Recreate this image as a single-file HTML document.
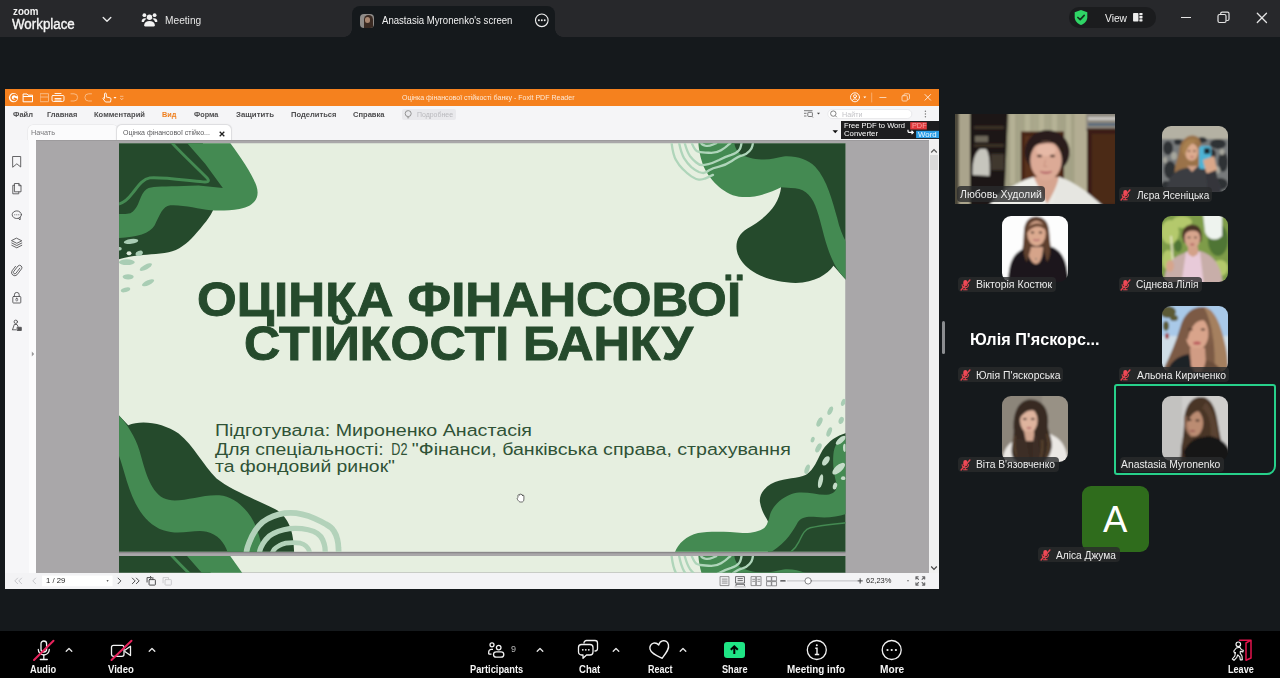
<!DOCTYPE html>
<html lang="uk">
<head>
<meta charset="utf-8">
<title>Zoom Meeting</title>
<style>
*{box-sizing:border-box;margin:0;padding:0}
html,body{width:1280px;height:678px;overflow:hidden;background:#15191c}
body{position:relative;font-family:"Liberation Sans","DejaVu Sans",sans-serif;color:#fff}
.abs,.t,svg.i{position:absolute}
.t{white-space:nowrap}
#topbar{left:0;top:0;width:1280px;height:37px;background:#27282b}
#tab{left:352px;top:6px;width:203px;height:31px;background:#15191c;border-radius:8px 8px 0 0}
#tab:before,#tab:after{content:"";position:absolute;bottom:0;width:8px;height:8px}
#tab:before{left:-8px;background:radial-gradient(circle at 0 0,#27282b 7.5px,#15191c 8px)}
#tab:after{right:-8px;background:radial-gradient(circle at 100% 0,#27282b 7.5px,#15191c 8px)}
#bottombar{left:0;top:631px;width:1280px;height:47px;background:#000}
#share{left:5px;top:89px;width:934px;height:500px;background:#a9a7a9;overflow:hidden}
.lbl{position:absolute;height:15px;border-radius:4px;background:rgba(41,42,44,.8)}
.av{position:absolute;width:66px;height:66px;border-radius:9px;overflow:hidden}
.av svg{display:block}
</style>
</head>
<body>
<!-- top bar -->
<div id="topbar" class="abs">
<div class="t" style="left:12.50px;top:5.94px;font-size:10px;line-height:12px;color:#f3f3f3;font-weight:bold;transform:scaleX(0.977);transform-origin:left center;">zoom</div><div class="t" style="left:12.30px;top:16.45px;font-size:14px;line-height:17px;color:#f6f6f6;transform:scaleX(0.953);transform-origin:left center;-webkit-text-stroke:0.35px #f6f6f6;">Workplace</div><svg class="i" style="left:101px;top:15px" width="12" height="9" viewBox="0 0 12 9"><path d="M2.200 2.500 L6 6.200 L9.800 2.500" fill="none" stroke="#e8e8e8" stroke-width="1.400" stroke-linecap="round" stroke-linejoin="round"/></svg>
<svg class="i" style="left:141px;top:11px" width="17" height="17" viewBox="0 0 17 17" fill="#f2f2f2"><circle cx="8.500" cy="6.200" r="2.700"/><circle cx="3.400" cy="4.200" r="1.900"/><circle cx="13.600" cy="4.200" r="1.900"/><path d="M4.300 15.500c-.9 0-1.300-.6-1.200-1.400C3.500 11.400 5.500 10 8.500 10s5 1.400 5.400 4.100c.1.800-.3 1.400-1.200 1.400z"/><path d="M.6 10.300C.8 8.300 2 7.200 4 7.200c.7 0 1.300.2 1.800.5C4.400 8.400 3.300 9.500 2.900 11H1.500C.9 11 .5 10.800.6 10.300z"/><path d="M16.400 10.300C16.200 8.300 15 7.200 13 7.200c-.7 0-1.300.2-1.800.5 1.400.7 2.500 1.800 2.900 3.300h1.400c.6 0 1-.2.900-.7z"/></svg>
<div class="t" style="left:164.50px;top:14.26px;font-size:10.5px;line-height:13px;color:#e6e6e6;transform:scaleX(0.969);transform-origin:left center;">Meeting</div><div class="abs" style="left:1069px;top:7px;width:87px;height:21px;border-radius:10px;background:#1b1c1e"></div>
<svg class="i" style="left:1073px;top:9px" width="16" height="17" viewBox="0 0 16 17"><path d="M8 1 L14.300 3.300 V8.300 C14.300 12 11.500 14.800 8 16 C4.500 14.800 1.700 12 1.700 8.300 V3.300 Z" fill="#2fd566"/><path d="M4.900 8.500 L7.200 10.700 L11.200 6.400" fill="none" stroke="#14331f" stroke-width="1.700" stroke-linecap="round" stroke-linejoin="round"/></svg>
<div class="t" style="left:1105.00px;top:12.26px;font-size:10.5px;line-height:13px;color:#f0f0f0;transform:scaleX(0.975);transform-origin:left center;">View</div><svg class="i" style="left:1133.300px;top:13.300px" width="10" height="9" viewBox="0 0 11 10" fill="#ededed"><rect x="0" y="0" width="6" height="9.500" rx="0.800"/><rect x="7" y="0" width="3.500" height="2.600" rx="0.500"/><rect x="7" y="3.450" width="3.500" height="2.600" rx="0.500"/><rect x="7" y="6.900" width="3.500" height="2.600" rx="0.500"/></svg>
<div class="abs" style="left:1181px;top:17px;width:10px;height:1.300px;background:#e4e4e4"></div>
<svg class="i" style="left:1217px;top:11px" width="13" height="13" viewBox="0 0 13 13" fill="none" stroke="#e4e4e4" stroke-width="1.200"><rect x="1" y="3.500" width="8" height="8" rx="1.500"/><path d="M3.700 3.300 V2.600 a1.500 1.500 0 0 1 1.500 -1.500 H10.500 a1.500 1.500 0 0 1 1.500 1.500 V8 a1.500 1.500 0 0 1 -1.500 1.500 H9.300"/></svg>
<svg class="i" style="left:1256px;top:12px" width="12" height="12" viewBox="0 0 12 12"><path d="M1.300 1.300 L10.500 10.500 M10.500 1.300 L1.300 10.500" stroke="#e4e4e4" stroke-width="1.300" stroke-linecap="round"/></svg>
</div>
<div id="tab" class="abs">
<div class="abs" style="left:8px;top:8px;width:14px;height:14px;border-radius:7px;overflow:hidden;background:#8f8c89;border-radius:4px"><div class="abs" style="left:4px;top:1px;width:9px;height:14px;border-radius:5px 5px 2px 2px;background:#3a2a22"></div><div class="abs" style="left:5px;top:3px;width:4.500px;height:6px;border-radius:3px;background:#a88670"></div></div>
<div class="t" style="left:29.60px;top:8.26px;font-size:10.5px;line-height:13px;color:#f1f1f1;transform:scaleX(0.914);transform-origin:left center;">Anastasia Myronenko's screen</div><svg class="i" style="left:182px;top:7px" width="16" height="16" viewBox="0 0 16 16"><circle cx="7.800" cy="7.300" r="6.300" fill="none" stroke="#f0f0f0" stroke-width="1.100"/><circle cx="4.900" cy="7.300" r="0.950" fill="#f0f0f0"/><circle cx="7.800" cy="7.300" r="0.950" fill="#f0f0f0"/><circle cx="10.700" cy="7.300" r="0.950" fill="#f0f0f0"/></svg>
</div>
<!-- shared screen: Foxit PDF Reader -->
<div id="share" class="abs">
<div class="abs" style="left:0;top:0;width:934px;height:17px;background:#f5811e"></div>
<svg class="i" style="left:0;top:0" width="934" height="17" viewBox="5 89 934 17" fill="none" stroke="#fff" stroke-width="1" stroke-linecap="round" stroke-linejoin="round">
<circle cx="13.500" cy="97.700" r="4.600" fill="#fff" stroke="none"/><path d="M16.300 95.500 a3 3 0 1 0 0.300 3.600 L14.300 98.300" stroke="#f5811e" stroke-width="1.500"/>
<path d="M23.500 94 H27 L28 95.200 H32.500 V101.800 H23.500 Z M23.500 96.500 H32.500"/>
<g opacity="0.450"><rect x="40.500" y="93.700" width="8" height="8"/><path d="M40.500 97 H48.500"/></g>
<path d="M55 93.500 H61 M53 95.500 H63 a1 1 0 0 1 1 1 V100 a1.500 1.500 0 0 1 -1.500 1.500 H53.500 a1.500 1.500 0 0 1 -1.500 -1.500 V96.500 a1 1 0 0 1 1 -1 Z M55 98.500 H61 M55 100 H61" stroke-width="0.900"/>
<g opacity="0.450"><path d="M71 93.800 H74 a3.600 3.600 0 0 1 0 7.200 H71"/><path d="M91.500 93.800 H88.500 a3.600 3.600 0 0 0 0 7.200 H91.500"/></g>
<path d="M104.500 98 V94 a0.900 0.900 0 0 1 1.800 0 V97 L110 97.800 a1.200 1.200 0 0 1 1 1.300 L110.500 102 H105.500 L103.200 99 a0.800 0.800 0 0 1 1.300 -1 Z" stroke-width="0.900"/>
<path d="M113.500 97 L116.500 97 L115 98.800 Z" fill="#fff" stroke="none"/>
<g opacity="0.600"><path d="M120.500 96.300 H123 M120.500 98.300 L121.800 99.800 L123 98.300" stroke-width="0.800"/></g>
<circle cx="855" cy="97.300" r="4.500" stroke-width="0.900"/><circle cx="855" cy="96.200" r="1.500" stroke-width="0.900"/><path d="M852.300 100.500 a3 3 0 0 1 5.400 0" stroke-width="0.900"/>
<path d="M863.300 96.500 L866.300 96.500 L864.800 98.300 Z" fill="#fff" stroke="none"/>
<path d="M871.700 93 V102" opacity="0.500" stroke-width="0.700"/>
<path d="M879.800 97.500 H886" opacity="0.650"/>
<g opacity="0.700" stroke-width="0.900"><rect x="902" y="95.700" width="5.300" height="5.300" rx="1"/><path d="M904 95.500 V94.800 a1 1 0 0 1 1 -1 H908.500 a1 1 0 0 1 1 1 V98.300 a1 1 0 0 1 -1 1 H907.500"/></g>
<path d="M925 94.500 L930.600 100.200 M930.600 94.500 L925 100.200" opacity="0.800"/>
</svg>
<div class="t" style="left:396.60px;top:4.27px;font-size:7.3px;line-height:9px;color:#fde9d6;transform:scaleX(0.964);transform-origin:left center;">Оцінка фінансової стійкості банку - Foxit PDF Reader</div><div class="abs" style="left:0;top:17px;width:934px;height:34px;background:#f5f5f7"></div>
<div class="t" style="left:7.80px;top:20.70px;font-size:7.8px;line-height:9px;color:#4d4d4f;font-weight:bold;transform:scaleX(0.964);transform-origin:left center;">Файл</div><div class="t" style="left:41.50px;top:20.70px;font-size:7.8px;line-height:9px;color:#4d4d4f;font-weight:bold;transform:scaleX(0.958);transform-origin:left center;">Главная</div><div class="t" style="left:89.30px;top:20.70px;font-size:7.8px;line-height:9px;color:#4d4d4f;font-weight:bold;transform:scaleX(0.971);transform-origin:left center;">Комментарий</div><div class="t" style="left:157.20px;top:20.70px;font-size:7.8px;line-height:9px;color:#ef7f1e;font-weight:bold;transform:scaleX(0.936);transform-origin:left center;">Вид</div><div class="t" style="left:189.00px;top:20.70px;font-size:7.8px;line-height:9px;color:#4d4d4f;font-weight:bold;transform:scaleX(0.935);transform-origin:left center;">Форма</div><div class="t" style="left:231.00px;top:20.70px;font-size:7.8px;line-height:9px;color:#4d4d4f;font-weight:bold;transform:scaleX(1.004);transform-origin:left center;">Защитить</div><div class="t" style="left:286.00px;top:20.70px;font-size:7.8px;line-height:9px;color:#4d4d4f;font-weight:bold;transform:scaleX(0.972);transform-origin:left center;">Поделиться</div><div class="t" style="left:348.00px;top:20.70px;font-size:7.8px;line-height:9px;color:#4d4d4f;font-weight:bold;transform:scaleX(0.970);transform-origin:left center;">Справка</div><div class="abs" style="left:397px;top:20px;width:54px;height:11px;border-radius:2px;background:#e9e9ec"></div>
<svg class="i" style="left:398px;top:20px" width="11" height="11" viewBox="0 0 11 11" fill="none" stroke="#8a8a8a" stroke-width="0.900"><circle cx="5.200" cy="4.600" r="3"/><path d="M4.200 8.800 H6.200"/></svg>
<div class="t" style="left:411.60px;top:20.97px;font-size:7.3px;line-height:9px;color:#b9b9bd;transform:scaleX(0.951);transform-origin:left center;">Подробнее</div><svg class="i" style="left:795px;top:17px" width="139" height="34" viewBox="800 106 139 34" fill="none" stroke="#5a5a5c" stroke-width="0.800">
<path d="M804 110.700 H812.500 M804 113.300 H806.500 M804 116 H806.500"/><rect x="807.800" y="112.300" width="4.600" height="4.200" rx="0.800"/><path d="M812 116.300 L813 117.500"/>
<path d="M817 112.700 L820 112.700 L818.500 114.500 Z" fill="#444" stroke="none"/>
<rect x="827.800" y="109.500" width="84" height="9" rx="4.500" fill="#fff" stroke="#e2e2e5" stroke-width="0.700"/>
<circle cx="833.300" cy="113.600" r="2.700" stroke="#666" stroke-width="0.800"/><path d="M835.300 115.700 L836.800 117.200" stroke="#666"/>
<g fill="#777" stroke="none"><circle cx="925.400" cy="111.300" r="0.700"/><circle cx="925.400" cy="114" r="0.700"/><circle cx="925.400" cy="116.700" r="0.700"/></g>
<path d="M832.500 130.200 L838 130.200 L835.250 133.200 Z" fill="#111" stroke="none"/>
<rect x="841" y="121" width="98" height="18" fill="#1d1d1f" stroke="none"/>
<rect x="910.200" y="122.200" width="16.600" height="7.300" fill="#e03a3c" stroke="none"/>
<rect x="916.100" y="130.800" width="22.900" height="7.300" fill="#2c9fe6" stroke="none"/>
<path d="M908 129.700 V131.200 a1.200 1.200 0 0 0 1.200 1.200 H913 M911.500 130.700 L913.300 132.400 L911.500 134.100" stroke="#fff" stroke-width="1.200"/>
</svg>
<div class="t" style="left:837.40px;top:20.97px;font-size:7.3px;line-height:9px;color:#c4c4c8;transform:scaleX(0.984);transform-origin:left center;">Найти</div><div class="t" style="left:838.80px;top:31.73px;font-size:8px;line-height:10px;color:#fff;transform:scaleX(0.942);transform-origin:left center;">Free PDF to Word</div><div class="t" style="left:838.80px;top:39.73px;font-size:8px;line-height:10px;color:#fff;transform:scaleX(0.968);transform-origin:left center;">Converter</div><div class="t" style="left:906.50px;top:31.93px;font-size:8px;line-height:10px;color:#f7a1a1;transform:scaleX(0.912);transform-origin:left center;">PDF</div><div class="t" style="left:913.10px;top:40.53px;font-size:8px;line-height:10px;color:#eaf6ff;transform:scaleX(0.981);transform-origin:left center;">Word</div><div class="abs" style="left:23px;top:36px;width:90px;height:15px;background:#fbfbfc;border-radius:5px 5px 0 0;box-shadow:0 0 0 0.500px #e4e4e6"></div>
<div class="abs" style="left:112px;top:35.500px;width:114px;height:15.500px;background:#fff;border-radius:5px 5px 0 0;box-shadow:0 0 1px 0.500px #dcdcde"></div>
<div class="t" style="left:26.00px;top:39.47px;font-size:7.6px;line-height:9px;color:#77777a;transform:scaleX(0.960);transform-origin:left center;">Начать</div><div class="t" style="left:117.80px;top:39.47px;font-size:7.6px;line-height:9px;color:#5a5a5c;transform:scaleX(0.923);transform-origin:left center;">Оцінка фінансової стійко...</div><svg class="i" style="left:214px;top:41.500px" width="6" height="6" viewBox="0 0 6 6"><path d="M0.700 0.700 L5.300 5.300 M5.300 0.700 L0.700 5.300" stroke="#222" stroke-width="1.300"/></svg>
<div class="abs" style="left:0;top:51px;width:934px;height:433px;background:#a9a7a9"></div>
<div class="abs" style="left:0;top:51px;width:934px;height:1px;background:#9d9b9d"></div>
<div class="abs" style="left:0;top:51px;width:24px;height:433px;background:#f6f6f8"></div>
<div class="abs" style="left:24px;top:51px;width:7px;height:433px;background:#fcfcfd"></div>
<svg class="i" style="left:26px;top:262px" width="4" height="6" viewBox="0 0 4 6"><path d="M0.800 0.500 L3.200 3 L0.800 5.500 z" fill="#9a9a9a"/></svg>
<svg class="i" style="left:0;top:51px" width="31" height="300" viewBox="5 140 31 300" fill="none" stroke="#555557" stroke-width="0.900" stroke-linejoin="round" stroke-linecap="round">
<path d="M13 156.500 H20.700 V167 L16.850 163.800 L13 167 Z"/>
<path d="M14.800 183.500 H18.800 L21 185.700 V191.800 H14.800 Z M18.800 183.500 V185.700 H21 M14.600 185.300 H12.800 V193.800 H18.800 V192"/>
<ellipse cx="16.800" cy="214.700" rx="4.600" ry="3.800"/><path d="M18.500 218.300 L20 220 L20.300 217.500"/><g fill="#555557" stroke="none"><circle cx="14.800" cy="214.700" r="0.550"/><circle cx="16.800" cy="214.700" r="0.550"/><circle cx="18.800" cy="214.700" r="0.550"/></g>
<path d="M16.800 238.300 L21.800 240.800 L16.800 243.300 L11.800 240.800 Z M11.800 243 L16.800 245.500 L21.800 243 M11.800 245.300 L16.800 247.800 L21.800 245.300"/>
<path d="M19.800 268.200 L15.800 273.400 a1.400 1.400 0 0 1 -2.200 -1.700 L18 266 a2.300 2.300 0 0 1 3.600 2.800 L17 274.800 a3.200 3.200 0 0 1 -5 -3.900 L15.500 266.300"/>
<rect x="12.800" y="296.500" width="8" height="6.500" rx="0.700"/><path d="M14.400 296.300 V294.800 a2.400 2.400 0 0 1 4.800 0 V296.300"/><rect x="15.900" y="298.300" width="1.800" height="2.600" rx="0.700" stroke-width="0.700"/>
<circle cx="15.800" cy="321.800" r="1.700"/><path d="M12.500 329.800 L14.300 324.500 H17 L18 326.500 M13 329.800 H16"/><path d="M17.500 327.300 H21.300 V330.500 H17.500 Z" fill="#555557"/>
</svg>
<div class="abs" style="left:923.500px;top:51px;width:10.500px;height:433px;background:#f1f1f1"></div>
<div class="abs" style="left:924.500px;top:66px;width:8.500px;height:15px;background:#dadada"></div>
<svg class="i" style="left:925px;top:59px" width="8" height="6" viewBox="0 0 8 6"><path d="M1.200 4.500 L4 1.700 L6.800 4.500" fill="none" stroke="#555" stroke-width="1.200"/></svg>
<svg class="i" style="left:925px;top:476px" width="8" height="6" viewBox="0 0 8 6"><path d="M1.200 1.500 L4 4.300 L6.800 1.500" fill="none" stroke="#444" stroke-width="1.200"/></svg>
<svg class="i" style="left:114px;top:54px" width="726.500" height="429.700" viewBox="119 143 726.500 429.700" font-family="'Liberation Sans','DejaVu Sans',sans-serif">
<defs><clipPath id="pg1"><rect x="119" y="143.200" width="726.500" height="408.600"/></clipPath><clipPath id="pg2"><rect x="119" y="556" width="726.500" height="16.700"/></clipPath></defs>
<rect x="119" y="551.800" width="726.500" height="1.500" fill="#8a888a"/>
<g clip-path="url(#pg1)">
<rect x="119" y="143" width="726.500" height="409" fill="#e6efe0"/>
<!-- top-left corner -->
<g id="cTL" transform="translate(110 135) scale(0.22124)">
<path d="M40 28 H415 L520 245 L470 330 C455 370 420 410 380 455 C350 490 310 520 265 530 C215 540 150 540 100 548 C75 552 55 558 40 562 Z" fill="#254a2c"/>
<path d="M342 28 H538 L545 38 C590 100 640 170 662 230 C680 285 650 322 585 334 C540 342 490 342 455 340 C400 335 330 314 272 318 C238 322 226 360 202 408 C182 445 120 462 40 466 V357 C60 357 80 358 92 354 C110 345 118 328 126 314 C136 292 142 268 155 254 C168 240 180 237 198 235 C240 231 300 232 400 228 L510 240 L430 130 L350 38 Z" fill="#448a52"/>
<path d="M273 28 L282 38 C330 90 395 150 440 196 C452 210 440 214 420 212 C340 205 240 190 180 194 C145 200 125 235 100 265 C85 285 65 305 40 312" fill="none" stroke="#448a52" stroke-width="13"/>
<g fill="#a9cdb4"><ellipse cx="95" cy="481" rx="33" ry="11" transform="rotate(-8 95 481)"/><ellipse cx="44" cy="514" rx="9" ry="8"/><ellipse cx="132" cy="535" rx="17" ry="11" transform="rotate(-20 132 535)"/><ellipse cx="76" cy="575" rx="36" ry="13"/><ellipse cx="162" cy="597" rx="31" ry="11" transform="rotate(-28 162 597)"/><ellipse cx="82" cy="641" rx="25" ry="12"/><ellipse cx="172" cy="668" rx="30" ry="11" transform="rotate(-25 172 668)"/><ellipse cx="70" cy="700" rx="22" ry="10" transform="rotate(-15 70 700)"/></g>
<ellipse cx="86" cy="535" rx="11" ry="9" fill="#dfeadb"/>
</g>
<!-- top-right corner -->
<g id="cTR" transform="translate(640 135) scale(0.24336)">
<path d="M375 25 H850 V600 L795 537 C770 572 720 606 640 608 C540 606 450 570 415 515 C385 470 390 415 440 385 C520 340 570 290 580 215 L375 110 Z" fill="#254a2c"/>
<path d="M240 25 H388 V35 C392 60 405 75 420 82 C445 95 480 101 510 101 C540 101 560 92 590 88 C640 84 690 100 720 130 C770 185 790 270 810 340 C820 385 835 420 850 445 V597 C810 560 790 520 770 460 C750 400 740 340 720 290 C700 240 670 218 620 218 L580 215 C540 235 480 258 420 255 C350 250 290 190 262 130 C248 95 242 60 240 35 V25 Z" fill="#448a52"/>
<g fill="none" stroke="#afd5ba" stroke-width="9.500" stroke-linejoin="round" stroke-linecap="round">
<path d="M130 34 Q136 82 148 103 Q159 124 177 141 Q194 159 211 170 Q229 182 242 183 Q256 184 267 179 Q279 174 289 169 L300 164"/>
<path d="M161 34 Q169 74 181 95 Q194 116 211 132 Q229 147 242 152 Q256 157 263 156 Q271 155 284 145 Q298 136 325 130 Q352 124 377 107 Q402 89 421 84 Q440 78 450 66 Q460 55 462 44 L464 34"/>
<path d="M184 34 Q194 70 205 86 Q217 101 230 112 Q244 124 254 124 Q263 124 281 120 Q298 116 325 103 Q352 89 375 82 Q398 74 406 64 Q413 55 415 44 L417 34"/>
<path d="M213 34 Q225 62 234 66 Q244 70 248 70 Q252 70 282 73 Q313 76 333 63 Q352 51 361 42 L371 34"/>
<path d="M252 34 Q254 40 268 44 Q282 47 298 40 L313 34"/>
</g>
</g>
<!-- bottom-left corner -->
<g transform="translate(110 400) scale(0.28027)">
<path d="M32 55 L65 90 C110 70 190 80 245 120 C300 165 330 230 380 280 C430 320 520 355 590 390 C640 420 655 470 657 545 H32 Z" fill="#254a2c"/>
<path d="M32 55 C60 85 90 130 105 180 C125 250 140 320 190 350 C240 375 320 335 390 340 C450 345 500 400 520 450 C535 490 542 520 545 545 H420 C410 510 385 480 345 470 C300 460 250 485 190 465 C120 440 85 370 60 290 C48 250 40 220 32 200 Z" fill="#448a52"/>
<g fill="none" stroke="#b3d2ba" stroke-linecap="butt" stroke-linejoin="round">
<path d="M485 561 Q486 542 491 524 Q497 506 507 485 Q517 465 531 449 Q544 434 563 424 Q582 413 603 408 Q623 403 644 403 Q664 403 686 408 Q709 413 729 422 Q750 431 770 443 Q791 454 799 468 Q808 482 811 497 Q815 513 815 527 Q816 542 816 551 L816 561" stroke-width="20.5"/>
<path d="M531 561 Q532 542 538 527 Q544 513 555 499 Q565 485 582 477 Q599 468 620 463 Q640 458 662 458 Q685 458 707 463 Q729 468 741 477 Q753 485 759 499 Q765 513 767 527 Q768 542 768 551 L768 561" stroke-width="18.9"/>
<path d="M575 561 Q579 542 585 534 Q592 526 603 520 Q613 514 627 511 Q640 509 654 509 Q668 509 680 511 Q691 514 698 520 Q705 526 709 534 Q712 542 713 551 L714 561" stroke-width="17.1"/>
</g>
</g>
<!-- bottom-right corner -->
<g transform="translate(740 420) scale(0.20653)">
<path d="M515 62 C470 75 430 100 400 145 C375 190 360 240 320 265 C280 285 220 280 170 300 C120 320 90 360 97 400 C103 440 125 470 135 490 L135 640 H515 Z" fill="#254a2c"/>
<path d="M-315 640 C-300 600 -260 560 -203 547 C-150 538 -60 540 12 547 C50 550 97 540 120 520 C135 505 140 480 145 460 C155 425 190 380 250 358 C310 340 370 365 420 362 C460 358 475 335 465 300 C455 260 448 220 452 170 C455 120 480 90 515 78 V455 C470 470 420 475 370 470 C330 465 295 470 280 495 C260 530 230 590 150 640 Z" fill="#448a52"/>
<path d="M515 497 C450 505 390 510 340 522 C310 530 300 560 285 590 C275 610 260 628 245 640" fill="none" stroke="#448a52" stroke-width="7"/>
<g fill="#a9cdb4"><ellipse cx="385" cy="10" rx="12" ry="24" transform="rotate(25 385 10)"/><ellipse cx="490" cy="2" rx="12" ry="18" transform="rotate(20 490 2)"/><ellipse cx="432" cy="58" rx="11" ry="24" transform="rotate(22 432 58)"/><ellipse cx="380" cy="135" rx="12" ry="24" transform="rotate(28 380 135)"/><ellipse cx="325" cy="238" rx="11" ry="24" transform="rotate(20 325 238)"/><ellipse cx="352" cy="95" rx="9" ry="14" transform="rotate(20 352 95)"/><ellipse cx="437" cy="-45" rx="11" ry="22" transform="rotate(25 437 -45)"/><ellipse cx="500" cy="-85" rx="10" ry="18" transform="rotate(20 500 -85)"/></g>
<g fill="#c4dcc8"><ellipse cx="488" cy="98" rx="12" ry="30" transform="rotate(50 488 98)"/><ellipse cx="416" cy="198" rx="14" ry="26" transform="rotate(35 416 198)"/><ellipse cx="478" cy="236" rx="17" ry="38" transform="rotate(48 478 236)"/><ellipse cx="390" cy="296" rx="11" ry="34" transform="rotate(12 390 296)"/><ellipse cx="460" cy="320" rx="10" ry="17" transform="rotate(15 460 320)"/><ellipse cx="500" cy="282" rx="11" ry="9"/><ellipse cx="507" cy="135" rx="8" ry="20"/></g>
</g>
<!-- title -->
<text x="197" y="316.200" font-size="47.500" font-weight="bold" fill="#254a2c" stroke="#254a2c" stroke-width="0.900" textLength="544" lengthAdjust="spacingAndGlyphs">ОЦІНКА ФІНАНСОВОЇ</text>
<text x="244" y="360.300" font-size="47.500" font-weight="bold" fill="#254a2c" stroke="#254a2c" stroke-width="0.900" textLength="449" lengthAdjust="spacingAndGlyphs">СТІЙКОСТІ БАНКУ</text>
<text x="215" y="436.300" font-size="16.800" fill="#2f5236" textLength="317" lengthAdjust="spacingAndGlyphs">Підготувала: Мироненко Анастасія</text>
<text y="455" font-size="16.800" fill="#2f5236"><tspan x="215" textLength="168.700" lengthAdjust="spacingAndGlyphs">Для спеціальності:</tspan><tspan x="391.300" textLength="16.200" lengthAdjust="spacingAndGlyphs">D2</tspan><tspan x="411.800" textLength="379" lengthAdjust="spacingAndGlyphs">"Фінанси, банківська справа, страхування</tspan></text>
<text x="215" y="472.500" font-size="16.800" fill="#2f5236" textLength="180" lengthAdjust="spacingAndGlyphs">та фондовий ринок"</text>
<!-- hand cursor -->
<g transform="translate(516.500 493)" fill="#fff" stroke="#333" stroke-width="0.700" stroke-linejoin="round"><path d="M1.500 4.500 V2.300 a0.800 0.800 0 0 1 1.500 0 V1.500 a0.800 0.800 0 0 1 1.500 0 V2 a0.800 0.800 0 0 1 1.500 0 V3 a0.700 0.700 0 0 1 1.400 0 V6 C7.400 8 6.500 9 5.500 9 H3.800 C2.800 9 2 8 1 6.500 C0.300 5.500 1 4.800 1.500 4.500 Z"/></g>
</g>
<!-- next page sliver (same template, top of page 2) -->
<g clip-path="url(#pg2)">
<rect x="119" y="556" width="726.500" height="16.700" fill="#e6efe0"/>
<g transform="translate(0 413)"><use href="#cTL"/><use href="#cTR"/></g>
</g>
</svg>
<div class="abs" style="left:0;top:483.700px;width:934px;height:16.300px;background:#f3f3f5"></div>
<svg class="i" style="left:0;top:483.700px" width="934" height="16.300" viewBox="5 572.700 934 16.300" fill="none" stroke="#3c3c3e" stroke-width="0.900" stroke-linecap="round" stroke-linejoin="round">
<g stroke="#c2c2c6"><path d="M17.500 577.800 L14.700 580.600 L17.500 583.400 M21.500 577.800 L18.700 580.600 L21.500 583.400"/><path d="M35.500 577.800 L32.700 580.600 L35.500 583.400"/></g>
<rect x="42" y="575.300" width="70.500" height="10.700" fill="#fff" stroke="none"/>
<path d="M106.400 580 L108.600 580 L107.500 581.400 Z" fill="#333" stroke="none"/>
<path d="M118 577.800 L120.800 580.600 L118 583.400"/>
<path d="M132.300 577.800 L135.100 580.600 L132.300 583.400 M136.300 577.800 L139.100 580.600 L136.300 583.400"/>
<rect x="149" y="579.300" width="6.300" height="5.500" rx="0.600"/><path d="M147 581.800 V577.300 H151 M150.300 576 L151.600 577.300 L150.300 578.600 M152.800 577.300 V579"/>
<g stroke="#c6c6ca"><rect x="165" y="579.300" width="6.300" height="5.500" rx="0.600"/><path d="M163 582.500 V577.300 H168.500 V579"/></g>
<g stroke="#77777a" stroke-width="0.800"><rect x="720.500" y="576.300" width="8.500" height="9" /><path d="M722.300 578.800 H727.200 M722.300 580.800 H727.200 M722.300 582.800 H727.200"/>
<rect x="736" y="576.300" width="8.500" height="6.500" stroke="#4a4a4c"/><path d="M738 578.300 H742.500 M738 580.300 H742.500 M736 585.300 V584 H744.500 V585.300" stroke="#4a4a4c"/><path d="M735 586.600 H745.500" stroke="#c9c9cc" stroke-width="1.200"/>
<rect x="751.500" y="576.300" width="4.400" height="9"/><rect x="756.700" y="576.300" width="4.400" height="9"/><path d="M752.700 579 H754.700 M752.700 581 H754.700 M757.900 579 H759.900 M757.900 581 H759.900"/>
<rect x="767" y="576.300" width="4.400" height="4.200"/><rect x="772.200" y="576.300" width="4.400" height="4.200"/><rect x="767" y="581.300" width="4.400" height="4.200"/><rect x="772.200" y="581.300" width="4.400" height="4.200"/></g>
<path d="M780.800 580.600 H785.200" stroke-width="1.100"/>
<path d="M787.500 580.600 H857" stroke="#a9a9ad" stroke-width="0.700"/>
<circle cx="808.200" cy="580.600" r="3.200" fill="#fff" stroke="#6a6a6c" stroke-width="0.800"/>
<path d="M858 580.600 H862.400 M860.200 578.400 V582.800" stroke-width="1"/>
<path d="M907 580 L909.200 580 L908.100 581.400 Z" fill="#666" stroke="none"/>
<g stroke="#6a6a6c" stroke-width="1.100"><path d="M916 578.800 V576.500 H918.300 M922.500 576.500 H924.800 V578.800 M924.800 582.500 V584.800 H922.500 M918.300 584.800 H916 V582.500 M916.200 576.700 L918.600 579.100 M924.600 576.700 L922.200 579.100 M924.600 584.600 L922.200 582.200 M916.200 584.600 L918.600 582.200"/></g>
</svg>
<div class="t" style="left:40.50px;top:487.27px;font-size:7.6px;line-height:9px;color:#1c1c1c;transform:scaleX(1.015);transform-origin:left center;">1 / 29</div><div class="t" style="left:861.00px;top:487.27px;font-size:7.6px;line-height:9px;color:#2a2a2a;transform:scaleX(0.989);transform-origin:left center;">62,23%</div></div>
<div class="abs" style="left:941.500px;top:321px;width:3.500px;height:33px;border-radius:2px;background:#8b8d90"></div>
<!-- participants gallery -->
<svg class="i" style="left:955px;top:114px" width="160" height="90" viewBox="0 0 160 90">
<defs><filter id="b1" x="-5%" y="-5%" width="110%" height="110%"><feGaussianBlur stdDeviation="1"/></filter><clipPath id="c1"><rect width="160" height="90"/></clipPath>
<linearGradient id="wall" x1="0" x2="1" y1="0" y2="0"><stop offset="0" stop-color="#8f8c72"/><stop offset="0.500" stop-color="#aaa88c"/><stop offset="1" stop-color="#9b987d"/></linearGradient></defs>
<g clip-path="url(#c1)"><g filter="url(#b1)">
<rect x="-5" y="-5" width="170" height="100" fill="url(#wall)"/>
<g fill="#bdb99c" opacity="0.700"><rect x="55" y="0" width="5" height="70"/><rect x="70" y="0" width="5" height="30"/><rect x="84" y="0" width="5" height="24"/><rect x="97" y="0" width="5" height="24"/><rect x="111" y="0" width="5" height="40"/></g>
<rect x="-5" y="-5" width="23" height="100" fill="#aaa48c"/><rect x="-5" y="-5" width="9" height="100" fill="#4e4a3a"/>
<path d="M15 -2 H53 L50 70 L48 95 H15 Z" fill="#1f1916"/><rect x="19" y="12" width="30" height="3" fill="#3a3128"/><rect x="19" y="30" width="30" height="3" fill="#3a3128"/>
<path d="M17.500 61 C17 48 20 38 25 35 H31 C35 39 35 54 34.500 62 Z" fill="#c6c5bd"/><rect x="20" y="22" width="13" height="6" fill="#6d675a"/><rect x="36" y="40" width="13" height="16" fill="#41382f"/>
<rect x="66" y="17.500" width="43" height="52" fill="#4a2715"/><rect x="70" y="22" width="35" height="46" fill="#5a321c"/>
<rect x="119.500" y="-5" width="13" height="100" fill="#b3ad93"/>
<rect x="131" y="-5" width="35" height="22" fill="#8f8a80"/><rect x="133" y="3" width="30" height="3" fill="#c9c7c2"/><rect x="133" y="9" width="30" height="3" fill="#5a6a7a"/>
<rect x="132" y="14.500" width="34" height="80" fill="#3a1f12"/><rect x="137" y="20" width="24" height="70" fill="#4c2a17"/>
<ellipse cx="92.200" cy="38" rx="22.500" ry="22" fill="#2a1d1a"/>
<path d="M34 92 C42 80 52 74 60 71 C68 68 74 65 78 63 H104 C114 66 124 72 134 80 C140 85 146 90 150 94 Z" fill="#e9e9e4"/>
<path d="M78 63 C82 74 88 84 92 90 C97 82 102 72 104 63 Z" fill="#d6a590"/>
<ellipse cx="91" cy="46.500" rx="15.800" ry="19.800" fill="#dcaa96"/><ellipse cx="91" cy="36" rx="10" ry="6" fill="#e6b9a6"/>
<path d="M73 40 C74 24 106 22 110 40 C106 30 98 28 91 29 C84 29 77 32 73 40 Z" fill="#2a1d1a"/>
<ellipse cx="84.500" cy="42" rx="2.600" ry="1.200" fill="#4a3028"/><ellipse cx="97.500" cy="42" rx="2.600" ry="1.200" fill="#4a3028"/>
<path d="M85 57.500 C88 60 94 60 97 57.500 C94 58.500 88 58.500 85 57.500 Z" fill="#b05a62" stroke="#b05a62" stroke-width="0.800"/>
<path d="M90.500 46 L89 52.500 H92.500" fill="none" stroke="#c48d7a" stroke-width="0.900"/>
<path d="M60 71 C68 66 76 63 79 64 L93 92 H40 Z" fill="#efefea"/>
<path d="M104 63 C112 66 122 72 148 94 H97 Z" fill="#e6e6e1"/>
</g></g>
</svg>
<div class="lbl" style="left:956.6px;top:186.2px;width:88.4px;height:15.8px"></div>
<div class="t" style="left:960.30px;top:187.89px;font-size:11px;line-height:13px;color:#ededed;transform:scaleX(0.955);transform-origin:left center;">Любовь Худолий</div><svg width="0" height="0" style="position:absolute"><defs><filter id="bl" x="-10%" y="-10%" width="120%" height="120%"><feGaussianBlur stdDeviation="0.900"/></filter></defs></svg>
<!-- Лєра -->
<div class="av" style="left:1162px;top:126px"><svg width="66" height="66" viewBox="0 0 66 66"><g filter="url(#bl)">
<rect x="-4" y="-4" width="74" height="74" fill="#777a7b"/>
<rect x="-4" y="-4" width="74" height="17" fill="#b4b1a3"/>
<g fill="#2e3236"><ellipse cx="6" cy="22" rx="5" ry="7"/><ellipse cx="16" cy="16" rx="4" ry="3"/><ellipse cx="8" cy="44" rx="6" ry="9"/><ellipse cx="56" cy="18" rx="8" ry="5"/><ellipse cx="61" cy="36" rx="5" ry="10"/><ellipse cx="50" cy="28" rx="4" ry="5"/><ellipse cx="58" cy="58" rx="8" ry="6"/><ellipse cx="4" cy="60" rx="5" ry="5"/><ellipse cx="40" cy="14" rx="5" ry="3"/></g>
<g fill="#a7a79e"><ellipse cx="12" cy="30" rx="3" ry="4"/><ellipse cx="54" cy="44" rx="4" ry="4"/><ellipse cx="60" cy="26" rx="2.500" ry="3"/><ellipse cx="3" cy="34" rx="2" ry="3"/></g>
<path d="M14 54 C10 44 16 34 17 26 C18 14 26 8 33 10 C40 11 40 22 38 34 C36 44 30 52 22 56 Z" fill="#9a7248"/>
<ellipse cx="29.500" cy="26" rx="6.500" ry="8.800" fill="#dcab8f"/>
<path d="M20 26 C20 14 30 10 36 16 C30 16 25 20 23 30 Z" fill="#a8804f"/><ellipse cx="27" cy="25" rx="1.500" ry="0.700" fill="#5a4030"/><ellipse cx="32.500" cy="25" rx="1.500" ry="0.700" fill="#5a4030"/><ellipse cx="30" cy="31" rx="2" ry="0.800" fill="#b86a66"/>
<path d="M4 70 C4 52 12 44 24 42 L36 40 C48 42 58 50 60 70 Z" fill="#3b3c42"/>
<path d="M25 40 L30 46 L36 40 Z" fill="#d0a086"/>
<rect x="37" y="20" width="12" height="23" rx="2.500" fill="#4db3d4"/><rect x="42" y="22" width="6" height="6" rx="1.500" fill="#1d2a33"/>
<path d="M41 34 L52 30 L55 44 L50 52 L44 46 Z" fill="#d9a789"/>
<path d="M44 48 L54 44 L58 66 H46 Z" fill="#34353b"/>
</g></svg></div>
<!-- Вікторія -->
<div class="av" style="left:1002px;top:216px"><svg width="66" height="66" viewBox="0 0 66 66"><g filter="url(#bl)">
<rect x="-4" y="-4" width="74" height="74" fill="#fdfdfd"/>
<path d="M18 40 C21 36 21.500 24 22 14 C23 4 29 0 35 0.500 C42 1 46 6 47 14 C48 24 48.500 34 51 39 C50 44 46 46 42 46 H26 C22 46 19 44 18 40 Z" fill="#5f3f2d"/>
<ellipse cx="34.500" cy="17.500" rx="9.300" ry="12.500" fill="#dcaa90"/>
<path d="M24.500 18 C24 5 44 3 45 16 C40 9 31 8 24.500 18 Z" fill="#65432f"/>
<path d="M6 70 C6 56 8 44 14 38 C17 35 20 33 24 32 L30 30 H42 L50 31 C56 33 60 38 62.500 44 C65 50 66 58 67 70 Z" fill="#1b191a"/>
<path d="M24.500 31 C26 41 30 48 34 48 C38 48 41 41 41 31 Z" fill="#d6a48a"/>
<path d="M23 24 C21 32 21 40 25 46 L29 32 Z" fill="#5f3f2d"/><path d="M46 24 C49 32 49 40 45 46 L41 32 Z" fill="#5f3f2d"/>
<ellipse cx="30.500" cy="16.500" rx="1.800" ry="0.900" fill="#3a2920"/><ellipse cx="38.500" cy="16.500" rx="1.800" ry="0.900" fill="#3a2920"/>
<path d="M31.500 23.500 C33 24.800 36 24.800 37.500 23.500" fill="none" stroke="#b0606a" stroke-width="1.200"/>
<circle cx="34" cy="43" r="1" fill="#8a7a70"/>
</g></svg></div>
<!-- Сіднєва -->
<div class="av" style="left:1162px;top:216px"><svg width="66" height="66" viewBox="0 0 66 66"><g filter="url(#bl)">
<rect x="-4" y="-4" width="74" height="74" fill="#7e9c48"/>
<g fill="#b4c96c"><ellipse cx="8" cy="16" rx="9" ry="12"/><ellipse cx="20" cy="6" rx="10" ry="6"/><ellipse cx="6" cy="44" rx="6" ry="10"/><ellipse cx="58" cy="52" rx="8" ry="8"/></g>
<g fill="#4f7434"><ellipse cx="56" cy="24" rx="10" ry="16"/><ellipse cx="16" cy="30" rx="4" ry="6"/><ellipse cx="48" cy="6" rx="6" ry="5"/></g>
<path d="M41 -2 H60 V20 C54 26 46 24 43 16 Z" fill="#eef3ee"/>
<path d="M9 20 L11 48" stroke="#e9e6c8" stroke-width="1.600"/>
<path d="M20 20 C20 10 28 7 33 9 C39 10 41 18 39 26 L22 27 Z" fill="#4a3427"/>
<ellipse cx="30.300" cy="22.500" rx="7.800" ry="10.300" fill="#d7a58d"/>
<path d="M21 20 C22 10 36 8 39 18 C34 13 26 13 21 20 Z" fill="#4a3427"/><ellipse cx="27" cy="21.500" rx="1.700" ry="0.800" fill="#3a2a22"/><ellipse cx="33.500" cy="21.500" rx="1.700" ry="0.800" fill="#3a2a22"/><ellipse cx="30.300" cy="28.500" rx="2.200" ry="0.900" fill="#b0605f"/>
<path d="M2 70 C2 52 8 42 20 38 L26 35 H38 C50 38 60 48 61 70 Z" fill="#c8aea9"/>
<path d="M24 36 L19 70 H42 L38 36 Z" fill="#e8cad9"/>
<path d="M26 31 H36 V38 L31 41 L26 38 Z" fill="#d3a189"/>
<ellipse cx="8" cy="50" rx="4" ry="6" fill="#d6a58c"/>
</g></svg></div>
<!-- Альона -->
<div class="av" style="left:1162px;top:306px"><svg width="66" height="66" viewBox="0 0 66 66"><g filter="url(#bl)">
<rect x="-4" y="-4" width="74" height="74" fill="#a9c9e8"/>
<rect x="-4" y="30" width="74" height="40" fill="#cfdde6"/>
<g fill="#5c5a34"><ellipse cx="6" cy="6" rx="8" ry="6"/><ellipse cx="12" cy="12" rx="4" ry="3"/><ellipse cx="4" cy="20" rx="3" ry="5"/><ellipse cx="5" cy="30" rx="2" ry="3" fill="#a0454a"/></g>
<path d="M2 62 C8 50 14 36 18 22 C22 6 32 0 42 1 C55 4 58 24 62 40 C64 50 66 58 66 70 H0 Z" fill="#7b5a45"/>
<path d="M42 1 C55 4 60 24 64 42 C66 52 66 60 66 70 H52 C54 50 52 20 42 1 Z" fill="#a5805f"/>
<ellipse cx="35" cy="27.500" rx="11.500" ry="16.500" fill="#d9a48b"/>
<path d="M22 30 C20 12 34 4 47 16 C40 12 30 14 25.500 34 Z" fill="#7b5a45"/>
<path d="M47 16 C50 24 49 36 46 42 C50 36 52 24 47 16 Z" fill="#8a6650"/>
<ellipse cx="28.500" cy="23.500" rx="2.300" ry="1" fill="#4a342a"/><ellipse cx="41" cy="23.500" rx="2.300" ry="1" fill="#4a342a"/>
<ellipse cx="35" cy="37" rx="3.800" ry="1.500" fill="#b8545a"/>
<path d="M4 70 C6 58 14 50 27 48 L30 60 L34 70 Z" fill="#1d2026"/>
<path d="M28 42 L29 60 L36 70 L44 58 L43 42 Z" fill="#d19c84"/>
<path d="M44 54 C52 56 60 62 62 70 H40 Z" fill="#6b4d3b"/>
</g></svg></div>
<!-- Віта -->
<div class="av" style="left:1002px;top:396px"><svg width="66" height="66" viewBox="0 0 66 66"><g filter="url(#bl)">
<rect x="-4" y="-4" width="74" height="74" fill="#8c857a"/>
<rect x="40" y="-4" width="30" height="74" fill="#989185"/>
<path d="M0 70 C0 54 6 46 18 42 L48 38 C58 42 66 50 66 70 Z" fill="#ebe8e4"/>
<path d="M11 62 C7 52 13 42 11.500 32 C11 13 19 3 29 3.500 C42 4 47 15 46 28 C45 36 51 42 49.500 52 C48 60 45 64 41 68 H16 Z" fill="#382a23"/>
<path d="M13 40 C11 48 13 56 16 62 M45 38 C48 46 47 54 44 62 M40 44 C41 52 40 58 38 64" stroke="#59432f" stroke-width="2.200" fill="none"/>
<ellipse cx="26.800" cy="24.500" rx="8.800" ry="12.300" fill="#dfb49e"/>
<path d="M16.500 24 C17 8 35 6 38 19 C33 12 24 12 16.500 24 Z" fill="#382a23"/>
<path d="M22 35 L24 45 L32 45 L32 35 Z" fill="#d1a58f"/>
<ellipse cx="22.800" cy="23" rx="2" ry="1" fill="#3a2a24"/><ellipse cx="30.800" cy="23" rx="2" ry="1" fill="#3a2a24"/><ellipse cx="27" cy="32" rx="2.500" ry="1.100" fill="#b5686a"/>
<path d="M13 42 C15 50 13 58 17 68 L30 68 C26 60 26 50 24 44 Z" fill="#3d2e26"/>
<path d="M34 38 C38 46 36 58 40 68 L30 68 C32 58 30 48 32 40 Z" fill="#3d2e26"/>
</g></svg></div>
<!-- Anastasia -->
<div class="av" style="left:1162.400px;top:396px;height:64.500px"><svg width="66" height="66" viewBox="0 0 66 66"><g filter="url(#bl)">
<rect x="-4" y="-4" width="74" height="74" fill="#cfcecc"/>
<rect x="-4" y="-4" width="24" height="74" fill="#c3c2c0"/>
<path d="M20 62 C18 52 22 40 22 28 C22 10 30 0 40 1 C50 2 54 14 56 28 C58 40 60 50 62 58 V70 H20 Z" fill="#4a3528"/>
<ellipse cx="32" cy="27" rx="9.200" ry="13.500" fill="#bb8c72"/>
<path d="M22 24 C24 8 40 4 46 20 C40 12 30 12 24 30 Z" fill="#4a3528"/>
<path d="M40 12 C48 18 50 32 48 44 L56 44 C56 30 52 16 44 6 Z" fill="#5a4232"/><ellipse cx="27.500" cy="24" rx="2.200" ry="0.900" fill="#3a2a22"/><ellipse cx="35.500" cy="24.500" rx="2.200" ry="0.900" fill="#3a2a22"/><ellipse cx="30.500" cy="35" rx="2.800" ry="1.100" fill="#9a5a55"/><path d="M24 20 C24 30 26 38 30 41 C26 38 23 30 24 20 Z" fill="#9a715a" stroke="#9a715a" stroke-width="1.500"/>
<path d="M18 70 C20 54 26 46 36 42 L48 40 C58 42 66 48 68 56 V70 Z" fill="#121214"/>
<path d="M20 46 C22 54 22 60 26 68 L18 68 Z" fill="#3c2a20"/>
</g></svg></div>
<div class="lbl" style="left:1118.6px;top:186.9px;width:93.7px;height:15.3px"></div>
<svg class="i" style="left:1120.4px;top:188.9px" width="11" height="12" viewBox="0 0 12 13"><rect x="3.600" y="1" width="4.400" height="6.800" rx="2.200" fill="#ee4a58"/><path d="M2.300 6 a3.500 3.500 0 0 0 7 0 M5.800 9.600 V11.600 M3.800 11.800 H7.800" fill="none" stroke="#e5434f" stroke-width="1.100" stroke-linecap="round"/><path d="M1.200 12 L10.800 1" stroke="#e5434f" stroke-width="1.500" stroke-linecap="round"/></svg>
<div class="t" style="left:1136.60px;top:188.59px;font-size:11px;line-height:13px;color:#ededed;transform:scaleX(0.910);transform-origin:left center;">Лєра Ясеніцька</div><div class="lbl" style="left:958.0px;top:276.6px;width:97.6px;height:15.3px"></div>
<svg class="i" style="left:959.8px;top:278.6px" width="11" height="12" viewBox="0 0 12 13"><rect x="3.600" y="1" width="4.400" height="6.800" rx="2.200" fill="#ee4a58"/><path d="M2.300 6 a3.500 3.500 0 0 0 7 0 M5.800 9.600 V11.600 M3.800 11.800 H7.800" fill="none" stroke="#e5434f" stroke-width="1.100" stroke-linecap="round"/><path d="M1.200 12 L10.800 1" stroke="#e5434f" stroke-width="1.500" stroke-linecap="round"/></svg>
<div class="t" style="left:975.90px;top:278.29px;font-size:11px;line-height:13px;color:#ededed;transform:scaleX(0.958);transform-origin:left center;">Вікторія Костюк</div><div class="lbl" style="left:1118.6px;top:276.6px;width:83.0px;height:15.3px"></div>
<svg class="i" style="left:1120.4px;top:278.6px" width="11" height="12" viewBox="0 0 12 13"><rect x="3.600" y="1" width="4.400" height="6.800" rx="2.200" fill="#ee4a58"/><path d="M2.300 6 a3.500 3.500 0 0 0 7 0 M5.800 9.600 V11.600 M3.800 11.800 H7.800" fill="none" stroke="#e5434f" stroke-width="1.100" stroke-linecap="round"/><path d="M1.200 12 L10.800 1" stroke="#e5434f" stroke-width="1.500" stroke-linecap="round"/></svg>
<div class="t" style="left:1135.90px;top:278.29px;font-size:11px;line-height:13px;color:#ededed;transform:scaleX(0.919);transform-origin:left center;">Сіднєва Лілія</div><div class="t" style="left:969.90px;top:329.56px;font-size:16px;line-height:19px;color:#fff;font-weight:bold;transform:scaleX(1.015);transform-origin:left center;">Юлія П'яскорс...</div><div class="lbl" style="left:957.9px;top:367.0px;width:105.6px;height:15.3px"></div>
<svg class="i" style="left:959.7px;top:369.0px" width="11" height="12" viewBox="0 0 12 13"><rect x="3.600" y="1" width="4.400" height="6.800" rx="2.200" fill="#ee4a58"/><path d="M2.300 6 a3.500 3.500 0 0 0 7 0 M5.800 9.600 V11.600 M3.800 11.800 H7.800" fill="none" stroke="#e5434f" stroke-width="1.100" stroke-linecap="round"/><path d="M1.200 12 L10.800 1" stroke="#e5434f" stroke-width="1.500" stroke-linecap="round"/></svg>
<div class="t" style="left:975.60px;top:368.69px;font-size:11px;line-height:13px;color:#ededed;transform:scaleX(0.945);transform-origin:left center;">Юлія П'яскорська</div><div class="lbl" style="left:1118.6px;top:367.0px;width:110.3px;height:15.3px"></div>
<svg class="i" style="left:1120.4px;top:369.0px" width="11" height="12" viewBox="0 0 12 13"><rect x="3.600" y="1" width="4.400" height="6.800" rx="2.200" fill="#ee4a58"/><path d="M2.300 6 a3.500 3.500 0 0 0 7 0 M5.800 9.600 V11.600 M3.800 11.800 H7.800" fill="none" stroke="#e5434f" stroke-width="1.100" stroke-linecap="round"/><path d="M1.200 12 L10.800 1" stroke="#e5434f" stroke-width="1.500" stroke-linecap="round"/></svg>
<div class="t" style="left:1136.60px;top:368.69px;font-size:11px;line-height:13px;color:#ededed;transform:scaleX(0.939);transform-origin:left center;">Альона Кириченко</div><div class="lbl" style="left:958.0px;top:456.7px;width:100.9px;height:15.3px"></div>
<svg class="i" style="left:959.8px;top:458.7px" width="11" height="12" viewBox="0 0 12 13"><rect x="3.600" y="1" width="4.400" height="6.800" rx="2.200" fill="#ee4a58"/><path d="M2.300 6 a3.500 3.500 0 0 0 7 0 M5.800 9.600 V11.600 M3.800 11.800 H7.800" fill="none" stroke="#e5434f" stroke-width="1.100" stroke-linecap="round"/><path d="M1.200 12 L10.800 1" stroke="#e5434f" stroke-width="1.500" stroke-linecap="round"/></svg>
<div class="t" style="left:975.90px;top:458.39px;font-size:11px;line-height:13px;color:#ededed;transform:scaleX(0.933);transform-origin:left center;">Віта В'язовченко</div><div class="abs" style="left:1114.200px;top:383.700px;width:162px;height:91.300px;border:2.200px solid #27d08a;border-radius:3px 3px 9px 3px"></div>
<div class="lbl" style="left:1119.6px;top:456.7px;width:104.0px;height:15.3px"></div>
<div class="t" style="left:1121.30px;top:458.39px;font-size:11px;line-height:13px;color:#ededed;transform:scaleX(0.939);transform-origin:left center;">Anastasia Myronenko</div><div class="abs" style="left:1082px;top:486px;width:66.500px;height:66.300px;border-radius:9px;background:#2f6c1c"></div>
<div class="t" style="left:1103.03px;top:497.65px;font-size:36.5px;line-height:44px;color:#fff;">A</div><div class="lbl" style="left:1038.0px;top:547.0px;width:81.6px;height:15.3px"></div>
<svg class="i" style="left:1039.8px;top:549.0px" width="11" height="12" viewBox="0 0 12 13"><rect x="3.600" y="1" width="4.400" height="6.800" rx="2.200" fill="#ee4a58"/><path d="M2.300 6 a3.500 3.500 0 0 0 7 0 M5.800 9.600 V11.600 M3.800 11.800 H7.800" fill="none" stroke="#e5434f" stroke-width="1.100" stroke-linecap="round"/><path d="M1.200 12 L10.800 1" stroke="#e5434f" stroke-width="1.500" stroke-linecap="round"/></svg>
<div class="t" style="left:1055.80px;top:548.69px;font-size:11px;line-height:13px;color:#ededed;transform:scaleX(0.925);transform-origin:left center;">Аліса Джума</div><!-- bottom bar -->
<div id="bottombar" class="abs">
<div class="t" style="left:30.00px;top:33.24px;font-size:10px;line-height:12px;color:#f4f4f4;font-weight:bold;transform:scaleX(0.928);transform-origin:left center;">Audio</div><div class="t" style="left:108.20px;top:33.24px;font-size:10px;line-height:12px;color:#f4f4f4;font-weight:bold;transform:scaleX(0.954);transform-origin:left center;">Video</div><div class="t" style="left:470.00px;top:33.24px;font-size:10px;line-height:12px;color:#f4f4f4;font-weight:bold;transform:scaleX(0.929);transform-origin:left center;">Participants</div><div class="t" style="left:578.50px;top:33.24px;font-size:10px;line-height:12px;color:#f4f4f4;font-weight:bold;transform:scaleX(0.954);transform-origin:left center;">Chat</div><div class="t" style="left:647.50px;top:33.24px;font-size:10px;line-height:12px;color:#f4f4f4;font-weight:bold;transform:scaleX(0.896);transform-origin:left center;">React</div><div class="t" style="left:721.50px;top:33.24px;font-size:10px;line-height:12px;color:#f4f4f4;font-weight:bold;transform:scaleX(0.917);transform-origin:left center;">Share</div><div class="t" style="left:787.20px;top:33.24px;font-size:10px;line-height:12px;color:#f4f4f4;font-weight:bold;transform:scaleX(0.987);transform-origin:left center;">Meeting info</div><div class="t" style="left:879.60px;top:33.24px;font-size:10px;line-height:12px;color:#f4f4f4;font-weight:bold;transform:scaleX(1.013);transform-origin:left center;">More</div><div class="t" style="left:1228.00px;top:33.24px;font-size:10px;line-height:12px;color:#f4f4f4;font-weight:bold;transform:scaleX(0.910);transform-origin:left center;">Leave</div><svg class="i" style="left:65.3px;top:16px" width="8" height="6" viewBox="0 0 8 6"><path d="M1.200 4.300 L4 1.500 L6.800 4.300" fill="none" stroke="#e6e6e6" stroke-width="1.300" stroke-linecap="round" stroke-linejoin="round"/></svg>
<svg class="i" style="left:147.7px;top:16px" width="8" height="6" viewBox="0 0 8 6"><path d="M1.200 4.300 L4 1.500 L6.800 4.300" fill="none" stroke="#e6e6e6" stroke-width="1.300" stroke-linecap="round" stroke-linejoin="round"/></svg>
<svg class="i" style="left:536.3px;top:16px" width="8" height="6" viewBox="0 0 8 6"><path d="M1.200 4.300 L4 1.500 L6.800 4.300" fill="none" stroke="#e6e6e6" stroke-width="1.300" stroke-linecap="round" stroke-linejoin="round"/></svg>
<svg class="i" style="left:611.9px;top:16px" width="8" height="6" viewBox="0 0 8 6"><path d="M1.200 4.300 L4 1.500 L6.800 4.300" fill="none" stroke="#e6e6e6" stroke-width="1.300" stroke-linecap="round" stroke-linejoin="round"/></svg>
<svg class="i" style="left:679px;top:16px" width="8" height="6" viewBox="0 0 8 6"><path d="M1.200 4.300 L4 1.500 L6.800 4.300" fill="none" stroke="#e6e6e6" stroke-width="1.300" stroke-linecap="round" stroke-linejoin="round"/></svg>
<svg class="i" style="left:32px;top:8px" width="24" height="24" viewBox="0 0 24 24" fill="none" stroke="#f2f2f2" stroke-width="1.300" stroke-linecap="round"><rect x="9" y="2" width="5.600" height="11" rx="2.800"/><path d="M6.300 10.500 a5.500 5.500 0 0 0 11 0"/><path d="M11.800 16 V20.300 M8.300 20.500 H15.300"/><path d="M2 21 L21.500 1.700" stroke="#e8235c" stroke-width="2"/></svg>
<svg class="i" style="left:109px;top:8px" width="26" height="24" viewBox="0 0 26 24" fill="none" stroke="#f2f2f2" stroke-width="1.300" stroke-linejoin="round"><rect x="2.500" y="6.300" width="12.500" height="11" rx="2"/><path d="M15.500 11.500 L21.500 7.300 V16.500 L15.500 12.300"/><path d="M2.500 21 L22.500 1.700" stroke="#e8235c" stroke-width="2" stroke-linecap="round"/></svg>
<svg class="i" style="left:487px;top:10px" width="20" height="18" viewBox="0 0 20 18" fill="none" stroke="#f2f2f2" stroke-width="1.300"><circle cx="5" cy="3.800" r="2"/><circle cx="11.700" cy="6.600" r="2.300"/><path d="M1.700 13.200 V11 a2.600 2.600 0 0 1 2.600 -2.600 H6 M1.700 13.200 H4.500"/><rect x="6.500" y="10.800" width="10.300" height="5.400" rx="2.700"/></svg>
<div class="t" style="left:511.00px;top:13.35px;font-size:8.5px;line-height:10px;color:#b9b9b9;transform:scaleX(1.058);transform-origin:left center;">9</div><svg class="i" style="left:577px;top:8px" width="23" height="22" viewBox="0 0 23 22" fill="none" stroke="#f2f2f2" stroke-width="1.300" stroke-linejoin="round"><path d="M7 4.500 V4 a2.500 2.500 0 0 1 2.500 -2.500 H18 a2.500 2.500 0 0 1 2.500 2.500 V9.500 a2.500 2.500 0 0 1 -2.500 2.500 H17.500"/><path d="M4.500 5.500 H13 a3 3 0 0 1 3 3 V13 a3 3 0 0 1 -3 3 H9.500 L6 19.300 V16 H4.500 a3 3 0 0 1 -3 -3 V8.500 a3 3 0 0 1 3 -3 z"/><g fill="#f2f2f2" stroke="none"><circle cx="5.800" cy="10.800" r="0.900"/><circle cx="8.800" cy="10.800" r="0.900"/><circle cx="11.800" cy="10.800" r="0.900"/></g></svg>
<svg class="i" style="left:648px;top:8px" width="24" height="22" viewBox="0 0 24 22" fill="none" stroke="#f2f2f2" stroke-width="1.400" stroke-linejoin="round"><path d="M12 19.500 C7 15.500 2.500 12.300 2.500 7.800 C2.500 4.800 4.800 2.800 7.300 2.800 C9.300 2.800 11 3.900 12 5.800 C13 3.900 14.700 2.800 16.700 2.800 C19.200 2.800 21.500 4.800 21.500 7.800 C21.500 12.300 17 15.500 12 19.500 z" transform="rotate(-14 12 11)"/></svg>
<div class="abs" style="left:724px;top:11px;width:20.500px;height:16px;border-radius:3px;background:#1fe585"></div>
<svg class="i" style="left:724px;top:11px" width="21" height="16" viewBox="0 0 21 16"><path d="M10.300 12 V5 M6.800 7.800 L10.300 4.300 L13.800 7.800" fill="none" stroke="#000" stroke-width="2" stroke-linejoin="miter"/></svg>
<svg class="i" style="left:806px;top:8px" width="22" height="22" viewBox="0 0 22 22" fill="none" stroke="#f2f2f2" stroke-width="1.300"><circle cx="10.800" cy="11" r="9.500"/><circle cx="10.800" cy="6.300" r="1" fill="#f2f2f2" stroke="none"/><path d="M9.300 9.300 H11 V15.300 M8.800 15.500 H13.200" stroke-width="1.400"/></svg>
<svg class="i" style="left:881px;top:8px" width="22" height="22" viewBox="0 0 22 22" fill="none" stroke="#f2f2f2" stroke-width="1.300"><circle cx="10.700" cy="11" r="9.500"/><g fill="#f2f2f2" stroke="none"><circle cx="6.500" cy="11" r="1.100"/><circle cx="10.700" cy="11" r="1.100"/><circle cx="14.900" cy="11" r="1.100"/></g></svg>
<svg class="i" style="left:1229px;top:7px" width="25" height="24" viewBox="0 0 25 24" fill="none" stroke-linejoin="round" stroke-linecap="round"><path d="M10.500 2.200 H22 V20 L17 22.300 V5 L22 2.200" stroke="#e2134c" stroke-width="1.500"/><circle cx="9.300" cy="6.300" r="2.300" stroke="#f2f2f2" stroke-width="1.200" fill="#000"/><path d="M7.300 10 L10.800 9.300 L12.500 11.800 L14.300 12.300 L13.800 14 L11.300 13.300 L11.200 15.300 L13 18 L13.300 21.800 H11.300 L10.800 18.800 L8.800 16.800 L7.800 19.300 L5 22.300 L3.300 21 L5.800 18 L6.500 14.500 L5.500 15 L4.800 13 Z" stroke="#f2f2f2" stroke-width="1.150" fill="#000"/></svg>
</div>
</body>
</html>
